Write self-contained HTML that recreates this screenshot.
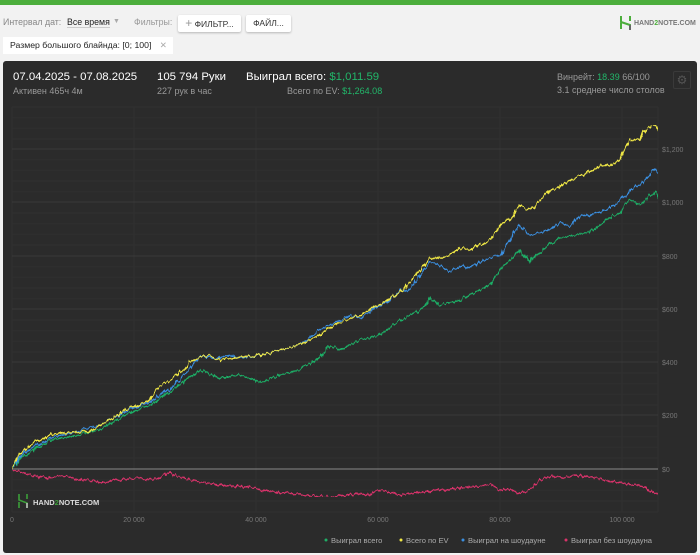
<!DOCTYPE html>
<html><head><meta charset="utf-8"><style>
body{margin:0;width:700px;height:555px;background:#f2f2f2;font-family:"Liberation Sans",sans-serif;position:relative;overflow:hidden}
.a{position:absolute;white-space:nowrap}
.btn{position:absolute;background:#fff;box-shadow:0 1px 2px rgba(0,0,0,.25);border-radius:2px;font-size:8.5px;color:#333;text-align:center;line-height:17px}
.panel{position:absolute;left:3px;top:61px;width:694px;height:492px;background:#2b2b2b;border-radius:3px}
.g{color:#22b76a}
</style></head><body>
<div class="a" style="left:0;top:0;width:700px;height:5px;background:#4cae3c"></div>
<div class="a" style="left:3px;top:17px;font-size:8.8px;color:#888">Интервал дат:</div>
<div class="a" style="left:67px;top:17px;font-size:8.8px;color:#222;border-bottom:1px solid #ccc">Все время</div>
<div class="a" style="left:113px;top:18px;font-size:7px;color:#aaa">▼</div>
<div class="a" style="left:134px;top:17px;font-size:8.8px;color:#999">Фильтры:</div>
<div class="btn" style="left:178px;top:15px;width:63px;height:17px"><span style="color:#999;font-size:12px">+</span> ФИЛЬТР...</div>
<div class="btn" style="left:246px;top:15px;width:45px;height:17px">ФАЙЛ...</div>
<div class="a" style="left:3px;top:37px;width:170px;height:17px;background:#fff;font-size:8.7px;color:#222;line-height:17px;text-indent:7px">Размер большого блайнда: [0; 100] <span style="color:#aaa;margin-left:6px">✕</span></div>
<svg class="a" style="left:619px;top:15px" width="14" height="16"><path d="M2 1v6l9 3v5M2 8v6M11 1v5" stroke="#4cae3c" stroke-width="2" fill="none"/><path d="M11 10v5" stroke="#666" stroke-width="2"/></svg>
<div class="a" style="left:634px;top:20px;font-size:7px;font-weight:bold;color:#777">HAND<span style="color:#4cae3c">2</span>NOTE.COM</div>

<div class="panel"></div>
<div class="a" style="left:13px;top:71px;font-size:11.4px;color:#fff">07.04.2025 - 07.08.2025</div>
<div class="a" style="left:13px;top:86px;font-size:9px;color:#999">Активен 465ч 4м</div>
<div class="a" style="left:157px;top:71px;font-size:11.4px;color:#fff">105 794 Руки</div>
<div class="a" style="left:157px;top:86px;font-size:9px;color:#999">227 рук в час</div>
<div class="a" style="left:246px;top:71px;font-size:11.4px;color:#fff">Выиграл всего: <span class="g">$1,011.59</span></div>
<div class="a" style="left:287px;top:86px;font-size:9px;color:#999">Всего по EV: <span class="g">$1,264.08</span></div>
<div class="a" style="left:557px;top:72px;font-size:9px;color:#999">Винрейт: <span class="g">18.39</span> 66/100</div>
<div class="a" style="left:557px;top:85px;font-size:9px;color:#999">3.1 среднее число столов</div>
<div class="a" style="left:673px;top:71px;width:16px;height:16px;border:1px solid #3a3a3a;border-radius:2px;color:#555;font-size:12px;text-align:center;line-height:16px">⚙</div>

<svg class="a" style="left:0;top:0" width="700" height="555">
<defs><filter id="n" x="0" y="0" width="1" height="1"><feTurbulence type="fractalNoise" baseFrequency="0.35 0.08" numOctaves="2" seed="3"/><feDisplacementMap in="SourceGraphic" scale="6" xChannelSelector="R" yChannelSelector="G"/></filter></defs>
<g stroke="#303030" stroke-width="1">
<path d="M12 107H658M12 117.7H658M12 128.3H658M12 139H658M12 159.7H658M12 170.3H658M12 181H658M12 191.7H658M12 213H658M12 223.7H658M12 234.3H658M12 245H658M12 266.7H658M12 277.3H658M12 288H658M12 298.7H658M12 320H658M12 330.7H658M12 341.3H658M12 352H658M12 373H658M12 383.7H658M12 394.3H658M12 405H658M12 426H658M12 436.7H658M12 447.3H658M12 458H658M12 479.7H658M12 490.3H658M12 501H658M12 512H658"/>
<path d="M12 107V512M134 107V512M256 107V512M378 107V512M500 107V512M622 107V512M658 107V512"/>
</g>
<g stroke="#3a3a3a" stroke-width="1"><path d="M12 149H658M12 202H658M12 256H658M12 309H658M12 362H658M12 415H658"/></g>
<path d="M12 469H658" stroke="#777" stroke-width="1.2"/>
<g font-size="7" fill="#777"><text x="662" y="152">$1,200</text><text x="662" y="205">$1,000</text><text x="662" y="259">$800</text><text x="662" y="312">$600</text><text x="662" y="365">$400</text><text x="662" y="418">$200</text><text x="662" y="472">$0</text></g>
<g font-size="7" fill="#777" text-anchor="middle"><text x="12" y="522">0</text><text x="134" y="522">20 000</text><text x="256" y="522">40 000</text><text x="378" y="522">60 000</text><text x="500" y="522">80 000</text><text x="622" y="522">100 000</text></g>
<g fill="none" stroke-width="1.4" filter="url(#n)" stroke-linejoin="round">
<polyline stroke="#d8336a" points="12,469 30,475 50,478 60,476 80,479 100,482 120,480 140,478 150,480 160,477 170,472 175,476 190,479 210,484 230,486 250,487 265,491 280,492 300,494 320,497 335,497 350,495 370,494 380,490 390,492 400,496 420,492 440,490 460,488 480,486 490,484 500,490 510,489 520,493 530,490 540,480 550,476 565,478 575,475 590,477 610,481 630,484 645,487 652,492 658,495"/>
<polyline stroke="#1fae66" points="12,468 25,455 50,440 75,436 100,430 125,415 150,405 175,388 200,370 220,378 240,375 260,382 280,375 300,370 320,358 330,345 340,350 350,345 360,340 380,335 400,320 420,310 430,298 440,305 450,303 460,300 470,295 480,290 490,285 500,270 510,260 520,250 530,262 540,252 550,245 560,238 575,235 590,232 600,225 610,218 620,213 630,200 640,205 650,195 655,192 658,198"/>
<polyline stroke="#3b8fe0" points="12,468 25,452 50,438 75,432 100,425 125,412 150,402 175,385 200,356 220,358 230,355 240,358 260,355 280,350 300,345 320,330 340,320 350,315 360,318 370,312 390,300 400,290 410,290 420,275 430,262 440,265 450,272 460,265 470,268 480,262 490,258 500,255 510,240 520,225 530,235 540,232 550,230 560,222 570,227 580,215 590,215 600,212 610,208 620,200 630,190 640,185 650,175 655,168 658,173"/>
<polyline stroke="#f0e845" points="12,468 20,455 30,445 50,435 70,432 90,432 100,425 110,420 125,410 140,405 150,400 160,385 170,380 180,372 190,362 200,357 210,355 220,360 230,358 240,357 260,355 280,350 300,345 320,335 330,328 340,322 360,315 380,305 400,292 410,282 420,270 430,258 440,258 450,255 460,248 470,250 480,245 490,240 500,225 510,218 520,205 530,210 540,200 550,190 560,187 575,178 590,172 600,165 610,165 620,160 625,148 632,140 640,140 645,130 652,125 655,125 658,130"/>
</g>
<path d="M19 494v6l8 3v5M19 502v6M27 494v5" stroke="#3c9e3a" stroke-width="1.6" fill="none"/><path d="M27 503v5" stroke="#bbb" stroke-width="1.6"/>
<text x="33" y="505" font-size="7.5" font-weight="bold" fill="#ddd">HAND<tspan fill="#3c9e3a">2</tspan>NOTE.COM</text>
<g font-size="7.6" fill="#aaa"><circle cx="326" cy="540" r="1.5" fill="#1fae66"/><text x="331" y="543">Выиграл всего</text>
<circle cx="401" cy="540" r="1.5" fill="#f0e845"/><text x="406" y="543">Всего по EV</text>
<circle cx="463" cy="540" r="1.5" fill="#3b8fe0"/><text x="468" y="543">Выиграл на шоудауне</text>
<circle cx="566" cy="540" r="1.5" fill="#d8336a"/><text x="571" y="543">Выиграл без шоудауна</text></g>
</svg>
</body></html>
